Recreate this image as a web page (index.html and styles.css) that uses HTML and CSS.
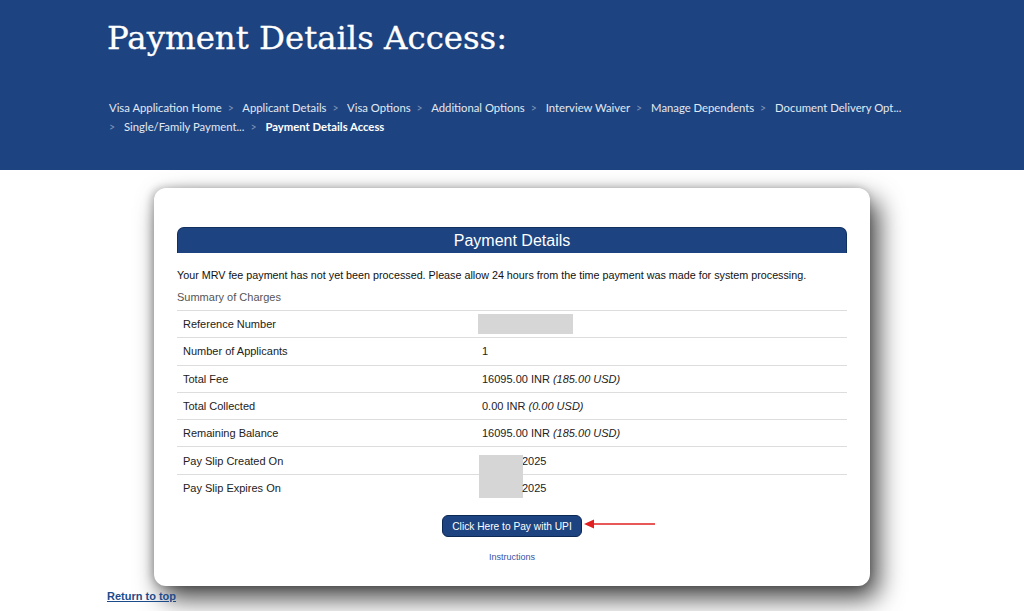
FILE: index.html
```html
<!DOCTYPE html>
<html lang="en">
<head>
<meta charset="utf-8">
<title>Payment Details Access</title>
<link rel="stylesheet" href="styles.css">
</head>
<body>
<header class="hero">
  <h1 class="hero-title">Payment Details Access:</h1>
  <nav class="crumbs">
    <span class="crumb">Visa Application Home</span><span class="sep">&gt;</span>
    <span class="crumb">Applicant Details</span><span class="sep">&gt;</span>
    <span class="crumb">Visa Options</span><span class="sep">&gt;</span>
    <span class="crumb">Additional Options</span><span class="sep">&gt;</span>
    <span class="crumb">Interview Waiver</span><span class="sep">&gt;</span>
    <span class="crumb">Manage Dependents</span><span class="sep">&gt;</span>
    <span class="crumb">Document Delivery Opt...</span><br>
    <span class="sep first">&gt;</span>
    <span class="crumb">Single/Family Payment...</span><span class="sep">&gt;</span>
    <span class="crumb current">Payment Details Access</span>
  </nav>
</header>
<main class="page">
  <section class="card">
    <h2 class="card-bar">Payment Details</h2>
    <p class="notice">Your MRV fee payment has not yet been processed. Please allow 24 hours from the time payment was made for system processing.</p>
    <p class="summary">Summary of Charges</p>
    <table class="charges">
      <tr><td class="label">Reference Number</td><td class="value"><span class="redact ref"></span></td></tr>
      <tr><td class="label">Number of Applicants</td><td class="value">1</td></tr>
      <tr><td class="label">Total Fee</td><td class="value">16095.00 INR <em>(185.00 USD)</em></td></tr>
      <tr><td class="label">Total Collected</td><td class="value">0.00 INR <em>(0.00 USD)</em></td></tr>
      <tr><td class="label">Remaining Balance</td><td class="value">16095.00 INR <em>(185.00 USD)</em></td></tr>
      <tr><td class="label">Pay Slip Created On</td><td class="value date"><span class="redact dates"></span>2025</td></tr>
      <tr><td class="label">Pay Slip Expires On</td><td class="value date">2025</td></tr>
    </table>
    <div class="actions">
      <div class="pay-row">
        <button class="pay-btn" type="button">Click Here to Pay with UPI</button>
        <svg class="arrow" width="72" height="10" viewBox="0 0 72 10" aria-hidden="true">
          <line x1="8" y1="5" x2="71" y2="5" stroke="#e02020" stroke-width="1.6"/>
          <polygon points="0,5 10,0.5 10,9.5" fill="#e02020"/>
        </svg>
      </div>
      <a class="instructions" href="#">Instructions</a>
    </div>
  </section>
  <a class="top-link" href="#">Return to top</a>
</main>
</body>
</html>
```
FILE: styles.css
```css
html, body {
  margin: 0;
  padding: 0;
  background: #ffffff;
}
body {
  font-family: "Liberation Sans", Arial, sans-serif;
  color: #222;
  width: 1024px;
  height: 611px;
  overflow: hidden;
}
.hero {
  background: #1d4380;
  height: 170px;
  box-sizing: border-box;
  padding: 15px 0 0 107px;
}
.hero-title {
  margin: 0;
  font-family: "DejaVu Serif", Georgia, serif;
  font-weight: normal;
  font-size: 32.4px;
  line-height: 46px;
  color: #ffffff;
  -webkit-text-stroke: 0.3px #ffffff;
}
.crumbs {
  margin-top: 37px;
  margin-left: 2px;
  font-family: Lato, "Open Sans", sans-serif;
  font-size: 11.3px;
  line-height: 19px;
  color: #e3e9f2;
}
.crumb { white-space: nowrap; }
.sep {
  color: #7f95b8;
  font-size: 10.5px;
  line-height: 1;
  margin: 0 6px;
}
.sep.first { margin-left: 0; }
.current { font-weight: 700; color: #fff; }

.page {
  padding-top: 18px;
}
.card {
  margin-left: 154px;
  width: 716px;
  height: 398px;
  box-sizing: border-box;
  padding: 39px 23px 0;
  background: #fff;
  border-radius: 12px;
  box-shadow: 8px 12px 26px rgba(0,0,0,0.75), -2px 0 8px rgba(0,0,0,0.25);
}
.card-bar {
  margin: 0;
  height: 26px;
  line-height: 26px;
  background: #1d4380;
  border: 1px solid #10305f;
  border-bottom: none;
  box-sizing: border-box;
  border-radius: 7px 7px 0 0;
  color: #fff;
  text-align: center;
  font-size: 16px;
  font-weight: normal;
}
.notice {
  margin: 15px 0 0;
  font-size: 10.75px;
  line-height: 14px;
  color: #111;
}
.summary {
  margin: 8px 0 0;
  font-size: 11px;
  line-height: 14px;
  color: #555;
}
.charges {
  margin-top: 6px;
  width: 100%;
  border-collapse: collapse;
  font-size: 11px;
  color: #222;
}
.charges td {
  height: 26.3px;
  padding: 0 6px;
  border-top: 1px solid #dddddd;
  vertical-align: middle;
}
.charges .label { width: 287px; }
.charges .value { position: relative; }
.redact {
  display: inline-block;
  background: #d6d6d6;
}
.redact.ref {
  width: 95px;
  height: 20px;
  vertical-align: middle;
  margin-left: -4px;
}
.redact.dates {
  position: absolute;
  left: 3px;
  top: 8px;
  width: 44px;
  height: 43px;
}
.value.date { padding-left: 46px; }
.charges em { font-style: italic; }

.actions {
  display: flex;
  flex-direction: column;
  align-items: center;
  margin-top: 14px;
}
.pay-row {
  position: relative;
  display: flex;
}
.pay-btn {
  height: 22px;
  padding: 0 9px;
  background: #1d4380;
  border: 1px solid #0c2855;
  border-radius: 6px;
  color: #fff;
  font-family: "Liberation Sans", Arial, sans-serif;
  font-size: 10.2px;
}
.arrow {
  position: absolute;
  left: 100%;
  top: 4px;
  margin-left: 2px;
}
.instructions {
  margin-top: 15px;
  font-size: 9px;
  color: #3553a8;
  text-decoration: none;
}
.top-link {
  display: inline-block;
  margin: 3px 0 0 107px;
  font-size: 11px;
  font-weight: bold;
  color: #1d4b8a;
  text-decoration: underline;
}
```
